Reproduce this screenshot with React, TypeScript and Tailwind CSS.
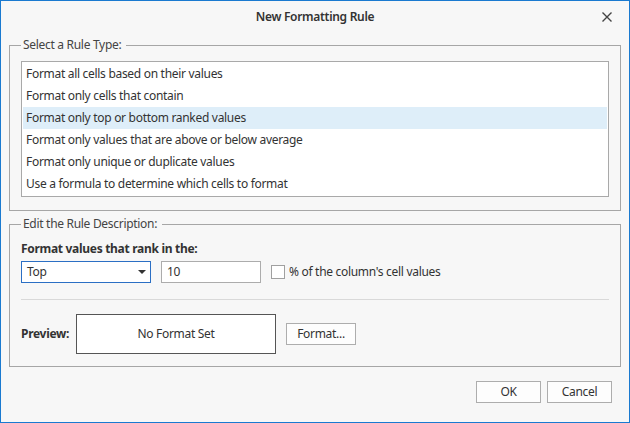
import React from "react"

const ruleTypes = [
  "Format all cells based on their values",
  "Format only cells that contain",
  "Format only top or bottom ranked values",
  "Format only values that are above or below average",
  "Format only unique or duplicate values",
  "Use a formula to determine which cells to format",
]

function CloseIcon() {
  return (
    <svg width="12" height="12" viewBox="0 0 12 12" className="text-[#444]">
      <path d="M1.5 1.5 L10.5 10.5 M10.5 1.5 L1.5 10.5" stroke="currentColor" strokeWidth="1.4" />
    </svg>
  )
}

export default function App() {
  const selected = 2

  return (
    <div
      className="w-[630px] h-[423px] border border-[#1a7ad0] bg-[#f7f7f7] flex flex-col text-[12px] tracking-[-0.3px] text-[#333]"
      style={{ fontFamily: '"Noto Sans", "Open Sans", sans-serif' }}
    >
      {/* title bar */}
      <div className="relative h-[32px] flex items-center justify-center shrink-0">
        <span className="font-semibold text-[#333]">New Formatting Rule</span>
        <button className="absolute right-[16px] top-[10px] flex items-center justify-center">
          <CloseIcon />
        </button>
      </div>

      {/* rule type */}
      <fieldset className="mt-[4px] mx-[8px] px-[11px] pb-[13px] border border-[#a6a6a6]">
        <legend className="pl-[2px] pr-[5px] leading-[16px] text-[#444]">Select a Rule Type:</legend>
        <div className="mt-[8px] border border-[#a9a9a9] bg-white p-[1px]">
          {ruleTypes.map((t, i) => (
            <div
              key={t}
              className={`h-[22px] leading-[22px] px-[3px] ${i === selected ? "bg-[#deeef9]" : ""}`}
            >
              {t}
            </div>
          ))}
        </div>
      </fieldset>

      {/* rule description */}
      <fieldset className="mt-[5px] mx-[8px] px-[11px] pb-[12px] border border-[#a6a6a6]">
        <legend className="pl-[2px] pr-[5px] leading-[16px] text-[#444]">Edit the Rule Description:</legend>
        <div className="mt-[9px] font-bold leading-[16px] text-[#333]">Format values that rank in the:</div>
        <div className="mt-[4px] flex items-center">
          <div className="w-[130px] h-[22px] border border-[#2b6fc4] bg-white flex items-center justify-between pl-[5px] pr-[4px]">
            <span>Top</span>
            <svg width="8" height="4" viewBox="0 0 8 4">
              <path d="M0 0 H8 L4 4 Z" fill="#333" />
            </svg>
          </div>
          <div className="ml-[10px] w-[100px] h-[22px] border border-[#acacac] bg-white flex items-center pl-[5px]">
            10
          </div>
          <div className="ml-[10px] w-[14px] h-[14px] border border-[#a0a0a0] bg-white" />
          <span className="ml-[4px]">% of the column's cell values</span>
        </div>
        <div className="mt-[16px] h-px bg-[#d9d9d9]" />
        <div className="mt-[14px] flex items-center">
          <span className="w-[55px] font-bold">Preview:</span>
          <div className="w-[200px] h-[40px] border border-[#555] bg-white flex items-center justify-center">
            No Format Set
          </div>
          <button className="ml-[10px] w-[70px] h-[22px] border border-[#adadad] bg-[#fdfdfd] flex items-center justify-center">
            Format...
          </button>
        </div>
      </fieldset>

      {/* footer */}
      <div className="mt-[14px] flex justify-end gap-[6px] pr-[17px]">
        <button className="w-[65px] h-[22px] border border-[#adadad] bg-[#fdfdfd]">OK</button>
        <button className="w-[65px] h-[22px] border border-[#adadad] bg-[#fdfdfd]">Cancel</button>
      </div>
    </div>
  )
}
